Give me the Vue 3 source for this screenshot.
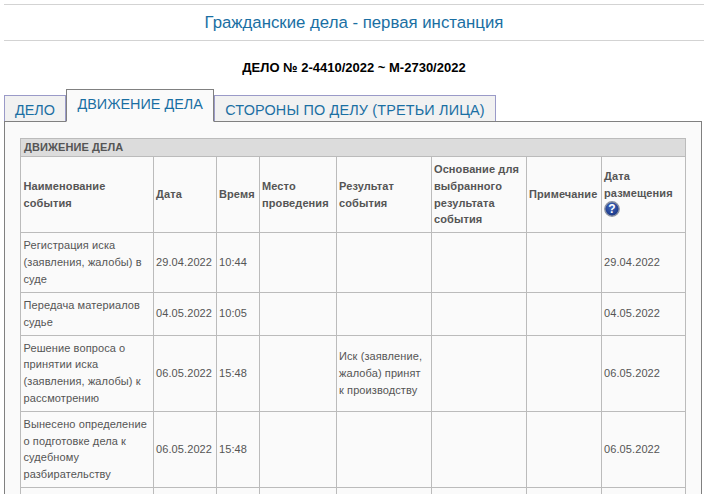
<script setup>
const headers = [
  { label: 'Наименование события' },
  { label: 'Дата' },
  { label: 'Время' },
  { label: 'Место проведения' },
  { label: 'Результат события' },
  { label: 'Основание для выбранного результата события' },
  { label: 'Примечание' },
  { label: 'Дата размещения', help: true },
]

// last row is cut off by the window, nothing of its text shows
const events = [
  ['Регистрация иска (заявления, жалобы) в суде', '29.04.2022', '10:44', '', '', '', '', '29.04.2022'],
  ['Передача материалов судье', '04.05.2022', '10:05', '', '', '', '', '04.05.2022'],
  ['Решение вопроса о принятии иска (заявления, жалобы) к рассмотрению', '06.05.2022', '15:48', '', 'Иск (заявление, жалоба) принят к производству', '', '', '06.05.2022'],
  ['Вынесено определение о подготовке дела к судебному разбирательству', '06.05.2022', '15:48', '', '', '', '', '06.05.2022'],
  ['', '', '', '', '', '', '', ''],
]
</script>

<template>
  <div class="page">
    <h1 class="title">Гражданские дела - первая инстанция</h1>
    <div class="case-no">ДЕЛО № 2-4410/2022 ~ М-2730/2022</div>

    <div class="tabs">
      <div class="tab">ДЕЛО</div>
      <div class="tab active">ДВИЖЕНИЕ ДЕЛА</div>
      <div class="tab parties">СТОРОНЫ ПО ДЕЛУ (ТРЕТЬИ ЛИЦА)</div>
    </div>

    <div class="panel">
      <table class="events">
        <colgroup>
          <col style="width: 133px" />
          <col style="width: 63px" />
          <col style="width: 43px" />
          <col style="width: 77px" />
          <col style="width: 95px" />
          <col style="width: 95px" />
          <col style="width: 75px" />
          <col style="width: 84px" />
        </colgroup>
        <thead>
          <tr>
            <th class="caption" colspan="8">ДВИЖЕНИЕ ДЕЛА</th>
          </tr>
          <tr class="head-row">
            <th v-for="h in headers" :key="h.label" :class="{ 'has-help': h.help }">
              {{ h.label }}
              <svg v-if="h.help" class="help" viewBox="0 0 16 16" width="16" height="16">
                <defs>
                  <radialGradient id="helpFill" cx="45%" cy="35%" r="70%">
                    <stop offset="0" stop-color="#4268bd" />
                    <stop offset="1" stop-color="#14307f" />
                  </radialGradient>
                </defs>
                <circle cx="8" cy="8" r="7.2" fill="url(#helpFill)" stroke="#8d94a3" stroke-width="1.4" />
                <text x="8" y="12.2" text-anchor="middle" class="help-mark">?</text>
              </svg>
            </th>
          </tr>
        </thead>
        <tbody>
          <tr v-for="(row, i) in events" :key="i" class="row">
            <td v-for="(cell, j) in row" :key="j">{{ cell }}</td>
          </tr>
        </tbody>
      </table>
    </div>
  </div>
</template>

<style scoped>
.page {
  width: 708px;
  height: 494px;
  overflow: hidden;
  font-family: "Liberation Sans", Arial, sans-serif;
  box-sizing: border-box;
  padding: 4px 4px 0;
}

.title {
  margin: 0;
  height: 35px;
  line-height: 35px;
  width: 700px;
  border-top: 1px solid #d3d3d3;
  border-bottom: 1px solid #d3d3d3;
  text-align: center;
  font-size: 16.8px;
  font-weight: normal;
  color: #1a6fa3;
}

.case-no {
  margin-top: 18px;
  height: 17px;
  line-height: 17px;
  text-align: center;
  font-size: 13px;
  font-weight: bold;
  color: #000;
}

.tabs {
  display: flex;
  align-items: flex-end;
  margin-top: 14px;
  height: 31px;
  position: relative;
  z-index: 1;
}

.tab {
  height: 25px;
  line-height: 29px;
  padding: 0 10px;
  background: #f1f1f1;
  border: 1px solid #9a9ac8;
  border-bottom: none;
  font-size: 14.4px;
  color: #1a6fa3;
}

.tab.active {
  height: 31px;
  line-height: 29px;
  padding: 0 10.5px;
  background: #fafafa;
  border-color: #808080;
  border-bottom: 1px solid #fafafa;
  margin-bottom: -1px;
}

.tab.parties {
  letter-spacing: 0.17px;
}

.panel {
  width: 698px;
  height: 400px;
  box-sizing: border-box;
  background: #fafafa;
  border: 1px solid #808080;
  padding: 16px 15px 0;
}

.events {
  table-layout: fixed;
  border-collapse: collapse;
  width: 665px;
  font-size: 11px;
  line-height: 16.8px;
  color: #555;
}

.events th,
.events td {
  border: 1px solid #bbb;
  padding: 4px 3px 4px 2px;
  text-align: left;
  vertical-align: middle;
  letter-spacing: 0.1px;
}

.events th {
  padding-right: 1px;
}

.events .caption {
  background: #dcdcdc;
  padding: 0 3px;
  height: 17px;
  line-height: 15px;
}

.head-row th:first-child,
.row td:first-child {
  padding-left: 2.5px;
}

.head-row .has-help {
  padding-bottom: 8px;
}

.row td {
  height: 34px;
}

.help {
  display: block;
}

.help-mark {
  font-family: "Liberation Sans", Arial, sans-serif;
  font-size: 12px;
  font-weight: bold;
  fill: #fff;
}
</style>
